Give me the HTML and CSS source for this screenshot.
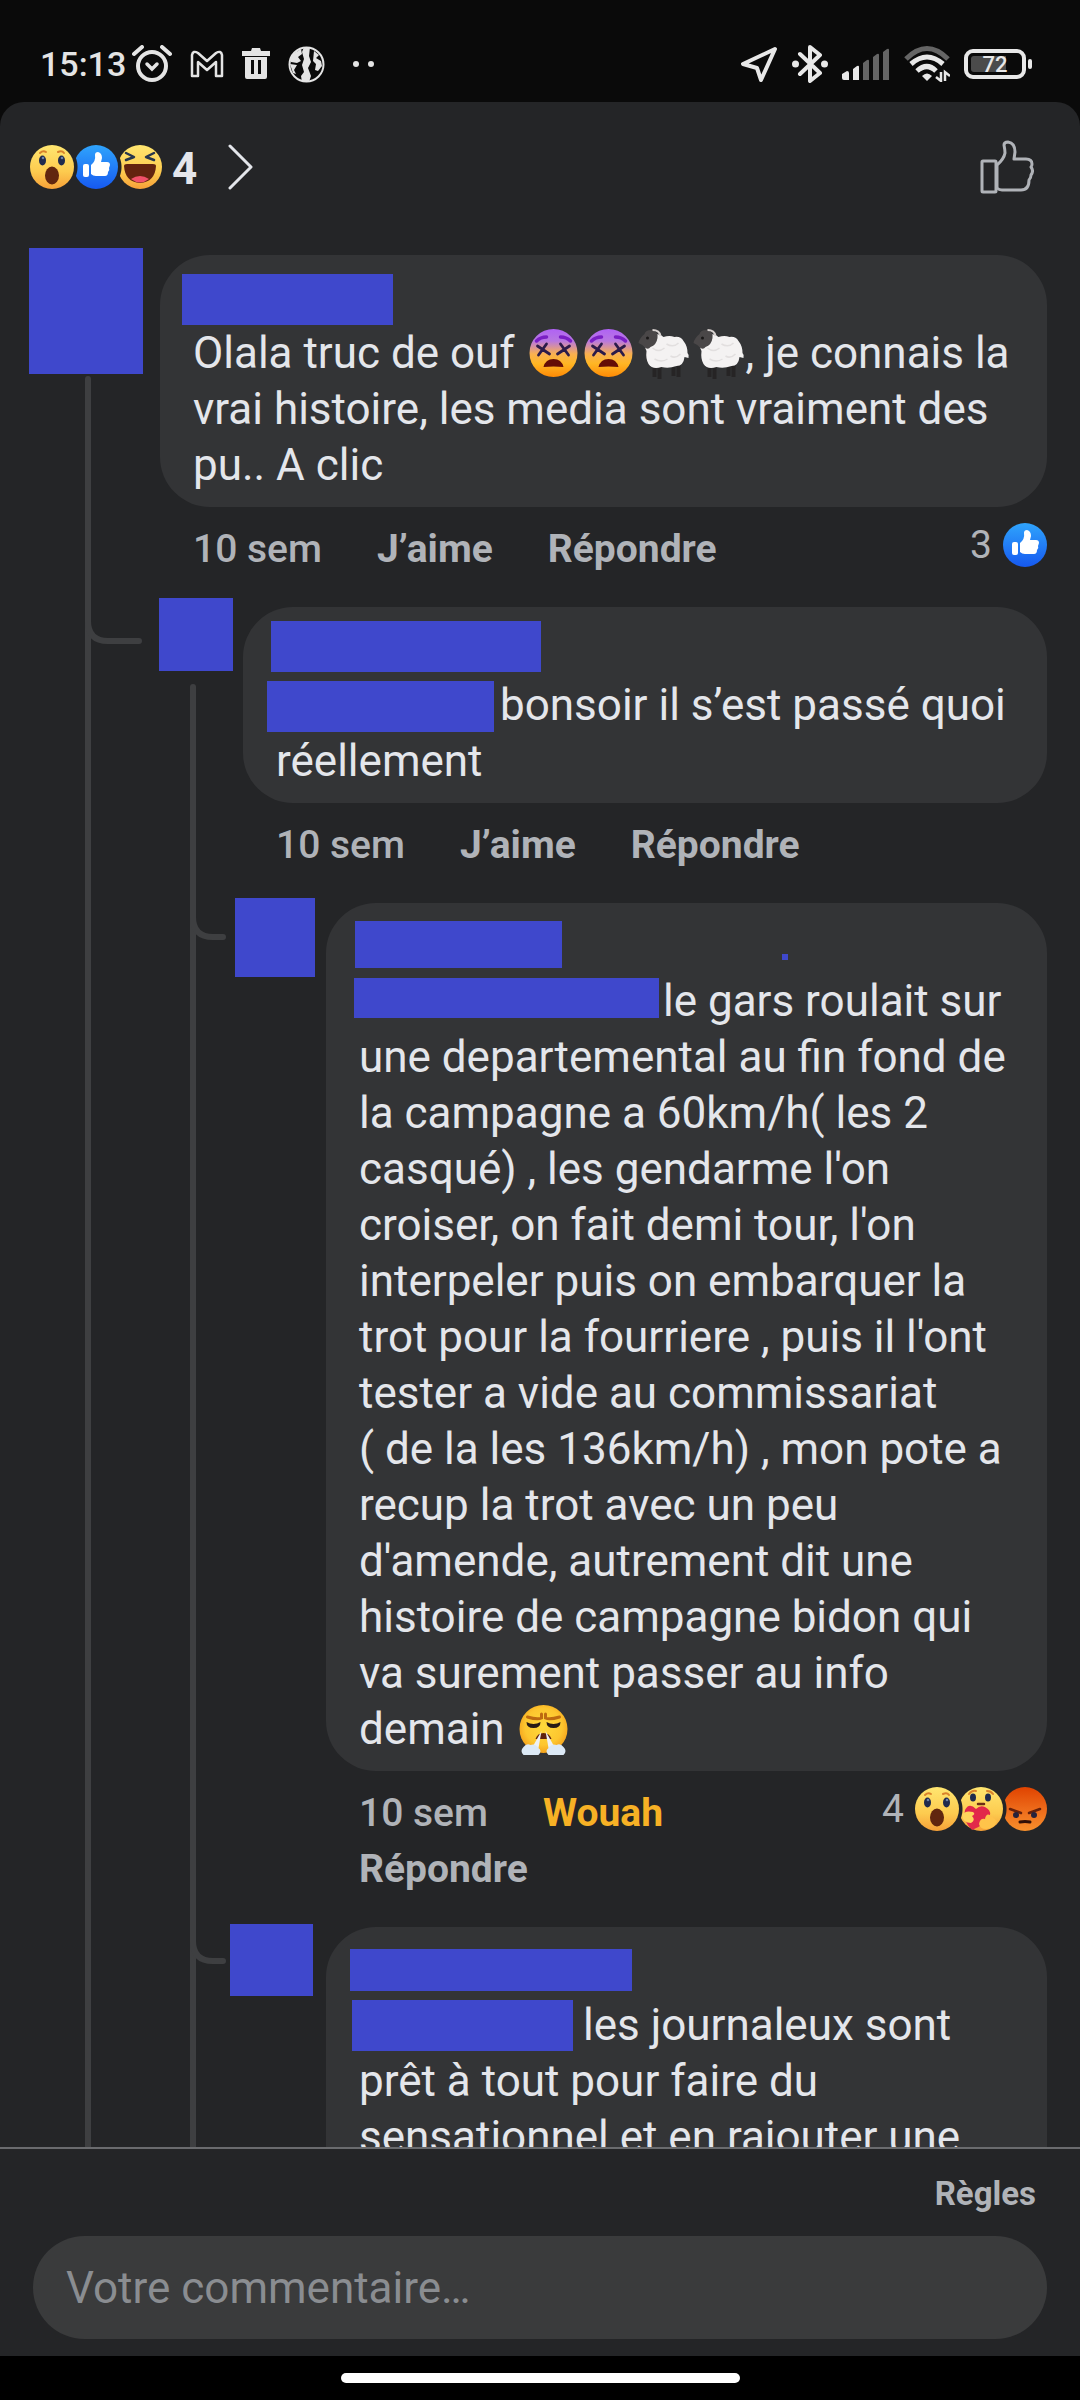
FILE: index.html
```html
<!DOCTYPE html>
<html lang="fr">
<head>
  <meta charset="UTF-8" />
  <meta name="viewport" content="width=device-width, initial-scale=1.0"/>
  <title>Commentaires</title>
  <link rel="stylesheet" href="styles.css">
</head>
<body>

  <!-- Dessins partagés -->
  <svg class="defs" width="0" height="0" aria-hidden="true">
    <defs>
      <linearGradient id="yellow" x1="0" y1="0" x2="0" y2="1">
        <stop offset="0" stop-color="#ffe670"/>
        <stop offset=".6" stop-color="#fdcb4f"/>
        <stop offset="1" stop-color="#f6a038"/>
      </linearGradient>
      <linearGradient id="blue" x1="0" y1="0" x2="0" y2="1">
        <stop offset="0" stop-color="#2fa4fc"/>
        <stop offset="1" stop-color="#1659f0"/>
      </linearGradient>
      <linearGradient id="purple" x1="0" y1="0" x2="0" y2="1">
        <stop offset="0" stop-color="#b062f5"/>
        <stop offset=".25" stop-color="#b878e0"/>
        <stop offset=".52" stop-color="#f9b050"/>
        <stop offset=".72" stop-color="#ffb624"/>
        <stop offset="1" stop-color="#ff8a05"/>
      </linearGradient>
      <linearGradient id="red" x1="0" y1="0" x2="0" y2="1">
        <stop offset="0" stop-color="#e04300"/>
        <stop offset=".5" stop-color="#ed6a1a"/>
        <stop offset="1" stop-color="#f8902c"/>
      </linearGradient>
      <radialGradient id="steam" cx=".5" cy=".45" r=".55">
        <stop offset="0" stop-color="#ffd93b"/>
        <stop offset=".7" stop-color="#fdc62f"/>
        <stop offset="1" stop-color="#f5a21c"/>
      </radialGradient>
      <symbol id="r-wow" viewBox="0 0 44 44">
        <circle cx="22" cy="22" r="22" fill="url(#yellow)"/>
        <path d="M10 8q3-3 6-1M28 7q4-2 6 1" fill="none" stroke="#d9822b" stroke-width="2" stroke-linecap="round"/>
        <ellipse cx="12.500" cy="15.500" rx="3.500" ry="5" fill="#1f2a4d"/>
        <ellipse cx="31.500" cy="15.500" rx="3.500" ry="5" fill="#1f2a4d"/>
        <circle cx="13" cy="13" r="1.300" fill="#6b82a8"/>
        <circle cx="32" cy="13" r="1.300" fill="#6b82a8"/>
        <ellipse cx="22" cy="30.500" rx="7" ry="9" fill="#61260f"/>
      </symbol>
      <symbol id="r-like" viewBox="0 0 44 44">
        <circle cx="22" cy="22" r="22" fill="url(#blue)"/>
        <rect x="9" y="19" width="6" height="13" rx="2" fill="#fff"/>
        <path d="M17 20q5-4 4-10 0-3 3-3 4 1 4 6l-1 4h6q3 0 3 3l-1 3q1 2-1 4 0 4-3 4H22q-3 0-5-2z" fill="#fff"/>
      </symbol>
      <symbol id="r-haha" viewBox="0 0 44 44">
        <circle cx="22" cy="22" r="22" fill="url(#yellow)"/>
        <path d="M8 8l8 4-8 3M36 8l-8 4 8 3" fill="none" stroke="#27364d" stroke-width="2.500" stroke-linecap="round" stroke-linejoin="round"/>
        <path d="M6 21q0-2 3-2h26q3 0 3 2-1 16-16 17Q7 37 6 21z" fill="#63230f"/>
        <path d="M13 34q9-6 18 0-9 7-18 0z" fill="#f0506a"/>
      </symbol>
      <symbol id="r-care" viewBox="0 0 44 44">
        <circle cx="22" cy="22" r="22" fill="url(#yellow)"/>
        <path d="M10 7q3-4 7-3M28 4q4 0 6 3" fill="none" stroke="#d9822b" stroke-width="2" stroke-linecap="round"/>
        <ellipse cx="14" cy="10.500" rx="3" ry="4" fill="#1f2a4d"/>
        <ellipse cx="29" cy="10.500" rx="3" ry="4" fill="#1f2a4d"/>
        <path d="M19 17h6" fill="none" stroke="#6b2d14" stroke-width="2.500" stroke-linecap="round"/>
        <path d="M13 43Q3 33 6 23q4-8 11-1 4-4 9-2 6 3 5 8-3 9-18 15z" fill="#e2284a"/>
        <path d="M3 28q3-5 11-3 3 2-1 4 4 4-1 7-8 0-9-8z" fill="#ffd65c"/>
        <path d="M20 37q1-6 6-5 1-6 5-4l7 6q-3 8-11 8-6 0-7-5z" fill="#ffc34a"/>
      </symbol>
      <symbol id="r-angry" viewBox="0 0 44 44">
        <circle cx="22" cy="22" r="22" fill="url(#red)"/>
        <path d="M7 22l11 4M37 22l-11 4" stroke="#66210b" stroke-width="2.500" stroke-linecap="round"/>
        <circle cx="13" cy="28" r="3" fill="#26223b"/>
        <circle cx="31" cy="28" r="3" fill="#26223b"/>
        <path d="M17 35q5-1 10 0" fill="none" stroke="#321007" stroke-width="3" stroke-linecap="round"/>
      </symbol>
      <symbol id="e-tired" viewBox="0 0 54 54">
        <circle cx="27" cy="27" r="24" fill="url(#purple)"/>
        <path d="M10 15q4-4 10-4M44 15q-4-4-10-4" fill="none" stroke="#7a1fc4" stroke-width="3.500" stroke-linecap="round"/>
        <path d="M11 20l12 8M12 29l8-11M31 28l12-8M34 18l8 11" stroke="#2b1b4a" stroke-width="2.800" stroke-linecap="round"/>
        <path d="M17 41q2-8 10-8t10 8q-10-1-20 0z" fill="#650d06"/>
      </symbol>
      <symbol id="e-sheep" viewBox="0 0 54 54">
        <path d="M16 36h4v15h-4zM21 37h4v16h-4zM35 37h4v13h-4zM40 35h4v16h-4z" fill="#262425"/>
        <path d="M18 9q5-2 9 2 6-2 11 0 6-1 9 4 4 5 4 12 2 2 1 5l-4-1q-1 9-8 9-8 3-15 1-9 3-13-3-3-5-2-13-3-6-1-10z" fill="#f4f2f2"/>
        <path d="M16 22q6 5 12 0M30 18q7 4 12-1M18 33q7 4 13 0M34 30q5 3 10-2" fill="none" stroke="#e2dfdf" stroke-width="1.500"/>
        <path d="M2 17q1-5 6-9 1-4 7-4 7 1 6 8-1 7-7 9-2 3-5 1-2-3-7-5z" fill="#4a4748"/>
        <circle cx="11" cy="12" r="1.500" fill="#1a1818"/>
        <path d="M16 4q7 0 8 6" fill="none" stroke="#d8d2d0" stroke-width="2"/>
      </symbol>
      <symbol id="e-steam" viewBox="0 0 54 54">
        <circle cx="27" cy="27" r="24" fill="url(#steam)"/>
        <path d="M11 15q10 3 14 1v-4M43 15q-10 3-14 1v-4" fill="none" stroke="#bd6a10" stroke-width="3" stroke-linecap="round"/>
        <path d="M10 20q7 4 14 0 0 6-7 6t-7-6zM44 20q-7 4-14 0 0 6 7 6t7-6z" fill="#281b16"/>
        <path d="M19 37q2-6 8-6t8 6z" fill="#5e210d"/>
        <path d="M25 29l-9 16 6 1zM29 29l9 16-6 1z" fill="#eef1f5"/>
        <path d="M7 53q-4-4 0-8 3-4 7-2 5-2 8 3 4 3 0 7zM47 53q4-4 0-8-3-4-7-2-5-2-8 3-4 3 0 7z" fill="#dce9f6"/>
      </symbol>
    </defs>
  </svg>

  <!-- Barre d'état -->
  <div class="status-bar">
    <div class="status-left">
      <span class="clock">15:13</span>
      <svg width="40" height="38" viewBox="0 0 40 38">
        <circle cx="20" cy="21" r="14" fill="none" stroke="#e4e4e4" stroke-width="4"/>
        <path d="M2 9l8-7M38 9l-8-7" fill="none" stroke="#e4e4e4" stroke-width="4" stroke-linecap="round"/>
        <path d="M15 19l5 5 5-5" fill="none" stroke="#e4e4e4" stroke-width="3.500" stroke-linecap="round"/>
      </svg>
      <svg width="34" height="28" viewBox="0 0 34 28">
        <path d="M2 26V5q1-5 6-2l9 8 9-8q5-3 6 2v21h-6V12l-9 8-9-8v14z" fill="none" stroke="#e4e4e4" stroke-width="2.500" stroke-linejoin="round"/>
      </svg>
      <svg width="28" height="32" viewBox="0 0 28 32">
        <path fill="#e4e4e4" fill-rule="evenodd" d="M0 3h9l1-3h8l1 3h9v5H0zM3 9h22v20q0 2-2 2H5q-2 0-2-2zM9 12v14h3V12zm7 0v14h3V12z"/>
      </svg>
      <svg width="37" height="37" viewBox="0 0 37 37">
        <circle cx="18.500" cy="18.500" r="17" fill="none" stroke="#e4e4e4" stroke-width="2"/>
        <path d="M16 1h6l-1 9 2 6-3 6 3 8-2 6h-7l-1-6 3-4-2-7 2-6-2-7zM5 8l8-5 1 5-4 3 3 4-4 2-6-1-1-4zM26 5l5 4-3 3 5 3 1 5-4 5-3-1 1-6-3-3zM2 18l7 1-3 5 2 4-3-1z" fill="#e4e4e4"/>
      </svg>
      <svg width="22" height="6" viewBox="0 0 22 6" class="more-dots">
        <circle cx="3" cy="3" r="3" fill="#e4e4e4"/>
        <circle cx="18" cy="3" r="3" fill="#e4e4e4"/>
      </svg>
    </div>
    <div class="status-right">
      <svg width="37" height="37" viewBox="0 0 37 37">
        <path d="M34 3L2 18l14 4 4 12z" fill="none" stroke="#e8e8e8" stroke-width="4" stroke-linejoin="round"/>
      </svg>
      <svg width="36" height="38" viewBox="0 0 36 38">
        <path d="M8 9l20 19-10 8V2l10 8L8 29" fill="none" stroke="#e8e8e8" stroke-width="4" stroke-linejoin="round" stroke-linecap="round"/>
        <circle cx="3.500" cy="19" r="3.500" fill="#e8e8e8"/>
        <circle cx="32.500" cy="19" r="3.500" fill="#e8e8e8"/>
      </svg>
      <svg width="48" height="32" viewBox="0 0 48 32">
        <path d="M0 26l5-3q2 0 2 2v7H2q-2 0-2-2zM11 21l4-3q2-1 2 1v13h-6z" fill="#e8e8e8"/>
        <path d="M21 15l4-3q2-1 2 1v19h-6zM31 9l4-3q2-1 2 1v25h-6zM41 4l4-3q2-1 2 1v30h-6z" fill="#656565"/>
      </svg>
      <svg width="46" height="36" viewBox="0 0 46 36">
        <path d="M2 13q21-21 42 0" fill="none" stroke="#656565" stroke-width="5"/>
        <path d="M7 18q16-14 32 0M13 25q10-9 19 0" fill="none" stroke="#e8e8e8" stroke-width="5"/>
        <path d="M18 30q5-5 10 0l-5 5z" fill="#e8e8e8"/>
        <path d="M37 26v9l-5-4M41 35v-9l5 4" fill="none" stroke="#e8e8e8" stroke-width="2.500"/>
      </svg>
      <div class="battery"><span class="battery-level">72</span></div>
    </div>
  </div>

  <div class="sheet">
    <header class="post-header">
      <button class="post-reactions" type="button">
        <span class="faces">
          <svg class="face"><use href="#r-wow"/></svg>
          <svg class="face cut"><use href="#r-like"/></svg>
          <svg class="face cut"><use href="#r-haha"/></svg>
        </span>
        <span class="total">4</span>
        <svg width="25" height="46" viewBox="0 0 25 46">
          <path d="M2 2l21 21L2 44" fill="none" stroke="#e4e6eb" stroke-width="3" stroke-linecap="round" stroke-linejoin="round"/>
        </svg>
      </button>
      <button class="like-post" type="button" aria-label="J’aime">
        <svg width="54" height="54" viewBox="0 0 54 54" fill="none" stroke="#b0b3b8" stroke-width="3" stroke-linejoin="round">
          <rect x="2" y="21" width="14" height="31" rx="1"/>
          <path d="M17 25q7-6 8-12 0-3-1-8 0-3 4-3 7 1 7 10l-1 7h12q6 0 6 5 0 2-1 3 3 4 0 8 0 3-2 5 0 10-8 10H22q-3 0-5-2z"/>
        </svg>
      </button>
    </header>

    <!-- Fil des commentaires -->
    <main class="feed">
      <ul class="thread">
        <li class="item root">
          <article class="comment">
            <div class="avatar-col"><span class="avatar avatar-1"></span></div>
            <div class="body">
              <div class="bubble">
                <div class="name"><span class="mask name-1"></span></div>
                <p>Olala truc de ouf <svg class="emoji"><use href="#e-tired"/></svg><svg class="emoji"><use href="#e-tired"/></svg><svg class="emoji"><use href="#e-sheep"/></svg><svg class="emoji"><use href="#e-sheep"/></svg>, je connais la vrai histoire, les media sont vraiment des pu.. A clic</p>
              </div>
              <footer class="actions">
                <div class="links">
                  <span>10 sem</span>
                  <button type="button">J’aime</button>
                  <button type="button">Répondre</button>
                </div>
                <div class="reactions">3 <span class="faces"><svg class="face"><use href="#r-like"/></svg></span></div>
              </footer>
            </div>
          </article>

          <ul class="replies">
            <li class="item reply">
              <svg class="elbow" width="57" height="37" viewBox="0 0 57 37"><path d="M3 0v14q0 20 20 20h31"/></svg>
              <article class="comment">
                <div class="avatar-col"><span class="avatar avatar-2"></span></div>
                <div class="body">
                  <div class="bubble">
                    <div class="name"><span class="mask name-2"></span></div>
                    <p><span class="mask mention-2"></span>bonsoir il s’est passé quoi réellement</p>
                  </div>
                  <footer class="actions">
                    <div class="links">
                      <span>10 sem</span>
                      <button type="button">J’aime</button>
                      <button type="button">Répondre</button>
                    </div>
                  </footer>
                </div>
              </article>

              <ul class="replies">
                <li class="item subreply">
                  <svg class="elbow" width="36" height="37" viewBox="0 0 36 37"><path d="M3 0v14q0 20 20 20h10"/></svg>
                  <article class="comment">
                    <div class="avatar-col"><span class="avatar avatar-3"></span></div>
                    <div class="body">
                      <div class="bubble">
                        <div class="name"><span class="mask name-3"></span><span class="mask speck"></span></div>
                        <p><span class="mask mention-3"></span>le gars roulait sur une departemental au fin fond de la campagne a 60km/h( les 2 casqué) , les gendarme l'on croiser, on fait demi tour, l'on interpeler puis on embarquer la trot pour la fourriere , puis il l'ont tester a vide au commissariat <br>( de la les 136km/h) , mon pote a recup la trot avec un peu d'amende, autrement dit une histoire de campagne bidon qui va surement passer au info demain <svg class="emoji"><use href="#e-steam"/></svg></p>
                      </div>
                      <footer class="actions">
                        <div class="links">
                          <span>10 sem</span>
                          <button type="button" class="wow">Wouah</button>
                          <button type="button">Répondre</button>
                        </div>
                        <div class="reactions">4 <span class="faces"><svg class="face"><use href="#r-wow"/></svg><svg class="face cut"><use href="#r-care"/></svg><svg class="face cut"><use href="#r-angry"/></svg></span></div>
                      </footer>
                    </div>
                  </article>
                </li>

                <li class="item subreply">
                  <svg class="elbow" width="36" height="37" viewBox="0 0 36 37"><path d="M3 0v14q0 20 20 20h10"/></svg>
                  <article class="comment">
                    <div class="avatar-col"><span class="avatar avatar-4"></span></div>
                    <div class="body">
                      <div class="bubble continued">
                        <div class="name"><span class="mask name-4"></span></div>
                        <p><span class="mask mention-4"></span>les journaleux sont prêt à tout pour faire du sensationnel et en rajouter une</p>
                      </div>
                    </div>
                  </article>
                </li>
              </ul>
            </li>
          </ul>
        </li>
      </ul>
    </main>

    <!-- Saisie -->
    <form class="composer">
      <a href="#" class="rules">Règles</a>
      <input type="text" class="field" placeholder="Votre commentaire…" aria-label="Votre commentaire">
    </form>
  </div>

  <div class="nav-bar"><span class="handle"></span></div>

</body>
</html>
```
FILE: styles.css
```css
/* Reset */
* {
  margin: 0;
  padding: 0;
  box-sizing: border-box;
}

body {
  font-family: Roboto, "Liberation Sans", sans-serif;
  background-color: #0a0a0a;
  color: #e4e6eb;
  height: 100vh;
  display: flex;
  flex-direction: column;
  overflow: hidden;
}

ul {
  list-style: none;
}

button {
  background: none;
  border: none;
  color: inherit;
  font: inherit;
  cursor: pointer;
}

svg {
  display: block;
  flex: none;
}

.defs {
  position: absolute;
}

/* Barre d'état */
.status-bar {
  flex: none;
  height: 102px;
  padding: 26px 48px 0 40px;
  display: flex;
  align-items: center;
  justify-content: space-between;
}

.status-left,
.status-right {
  display: flex;
  align-items: center;
}

.status-left {
  gap: 18px;
}

.status-right {
  gap: 14px;
}

.clock {
  font-size: 34px;
  font-weight: 500;
  color: #e4e4e4;
  margin-right: -12px;
}

.more-dots {
  margin-left: 10px;
}

.battery {
  width: 62px;
  height: 30px;
  border: 4px solid #e8e8e8;
  border-radius: 9px;
  padding: 3px;
  margin-right: 6px;
  position: relative;
}

.battery::after {
  content: "";
  position: absolute;
  right: -10px;
  top: 6px;
  width: 4px;
  height: 10px;
  border-radius: 2px;
  background: #e8e8e8;
}

.battery-level {
  display: block;
  height: 16px;
  border-radius: 3px;
  background: linear-gradient(to right, #4b4b4b 72%, transparent 72%);
  font-size: 22px;
  font-weight: 500;
  line-height: 18px;
  text-align: center;
  color: #e8e8e8;
}

/* Feuille */
.sheet {
  flex: 1;
  min-height: 0;
  display: flex;
  flex-direction: column;
  background: #242527;
  border-radius: 24px 24px 0 0;
}

.post-header {
  flex: none;
  height: 130px;
  padding: 0 46px 0 30px;
  display: flex;
  align-items: center;
  justify-content: space-between;
}

.post-reactions {
  display: flex;
  align-items: center;
}

.total {
  font-size: 44px;
  font-weight: 700;
  line-height: 48px;
  padding-top: 4px;
  margin: 0 31px 0 10px;
}

.faces {
  display: flex;
}

.face {
  width: 44px;
  height: 44px;
}

/* bord gauche entamé par la réaction précédente */
.face.cut {
  -webkit-mask: radial-gradient(circle at -22px 22px, transparent 25px, #000 26px);
  mask: radial-gradient(circle at -22px 22px, transparent 25px, #000 26px);
}

/* Fil */
.feed {
  flex: 1;
  min-height: 0;
  overflow: hidden;
  padding-top: 23px;
}

.item {
  position: relative;
}

.root::before,
.reply::before {
  content: "";
  position: absolute;
  width: 6px;
  background: #3e3f41;
  border-radius: 3px 3px 0 0;
  bottom: 0;
}

.root::before {
  left: 85px;
  top: 121px;
}

.reply::before {
  left: 190px;
  top: 77px;
}

.elbow {
  position: absolute;
  top: 0;
  left: 85px;
  fill: none;
  stroke: #3e3f41;
  stroke-width: 6px;
  stroke-linecap: round;
}

.subreply .elbow {
  left: 190px;
}

.comment {
  display: flex;
  padding-right: 33px;
}

.avatar-col {
  flex: none;
  width: 160px;
  display: flex;
  justify-content: flex-end;
  align-items: flex-start;
}

.reply > .comment > .avatar-col {
  width: 243px;
}

.subreply > .comment > .avatar-col {
  width: 326px;
}

.body {
  flex: 1;
  min-width: 0;
}

.bubble {
  background: #333436;
  border-radius: 50px;
  padding: 12px 32px 14px 33px;
  font-size: 44px;
  line-height: 56px;
}

/* la suite du texte passe sous la zone de saisie */
.bubble.continued {
  padding-bottom: 72px;
}

.name {
  height: 58px;
  display: flex;
}

.emoji {
  display: inline-block;
  width: 55px;
  height: 54px;
  vertical-align: -12px;
}

/* Caches bleus sur les noms et les photos */
.mask,
.avatar {
  background: #3f48cc;
  flex: none;
}

.mask {
  display: inline-block;
  height: 51px;
}

.avatar-1 { width: 114px; height: 126px; margin: -7px 17px 0 0; }
.avatar-2 { width: 74px; height: 73px; margin: -9px 10px 0 0; }
.avatar-3 { width: 80px; height: 79px; margin: -5px 11px 0 0; }
.avatar-4 { width: 83px; height: 72px; margin: -3px 13px 0 0; }

.name-1 { width: 211px; margin: 7px 0 0 -11px; }
.name-2 { width: 270px; margin: 2px 0 0 -5px; }
.name-3 { width: 207px; height: 47px; margin: 6px 0 0 -4px; }
.name-4 { width: 282px; height: 42px; margin: 10px 0 0 -9px; }

.mention-2,
.mention-3,
.mention-4 {
  vertical-align: top;
}

.mention-2 { width: 227px; margin: 4px 6px -4px -9px; }
.mention-3 { width: 305px; height: 40px; margin: 5px 4px 0 -5px; }
.mention-4 { width: 221px; margin: 3px 10px -3px -7px; }

.speck {
  width: 6px;
  height: 6px;
  margin: 39px 0 0 220px;
}

.actions {
  display: flex;
  align-items: flex-start;
  justify-content: space-between;
  padding: 14px 0 30px 33px;
  font-size: 39px;
  line-height: 56px;
  color: #b0b3b8;
}

.links {
  flex: 1;
  display: flex;
  flex-wrap: wrap;
  column-gap: 55px;
}

.links > span {
  font-weight: 500;
}

.links button {
  font-weight: 700;
}

.links .wow {
  color: #f7b125;
}

.reactions {
  display: flex;
  align-items: center;
  gap: 11px;
  line-height: 48px;
}

/* Saisie */
.composer {
  flex: none;
  border-top: 2px solid #6a6b6e;
  padding: 26px 33px 17px;
  display: flex;
  flex-direction: column;
}

.rules {
  align-self: flex-end;
  padding-right: 11px;
  font-size: 33px;
  font-weight: 700;
  line-height: 38px;
  color: #b0b3b8;
  text-decoration: none;
}

.field {
  width: 100%;
  height: 103px;
  margin-top: 23px;
  padding: 0 33px;
  border: none;
  border-radius: 52px;
  background: #3a3b3c;
  color: #e4e6eb;
  font-family: inherit;
  font-size: 44px;
}

.field::placeholder {
  color: #8a8d91;
}

/* Barre de navigation */
.nav-bar {
  flex: none;
  height: 44px;
  background: #000;
  display: flex;
  align-items: center;
  justify-content: center;
}

.handle {
  width: 399px;
  max-width: 60%;
  height: 10px;
  border-radius: 5px;
  background: #fff;
}
```
